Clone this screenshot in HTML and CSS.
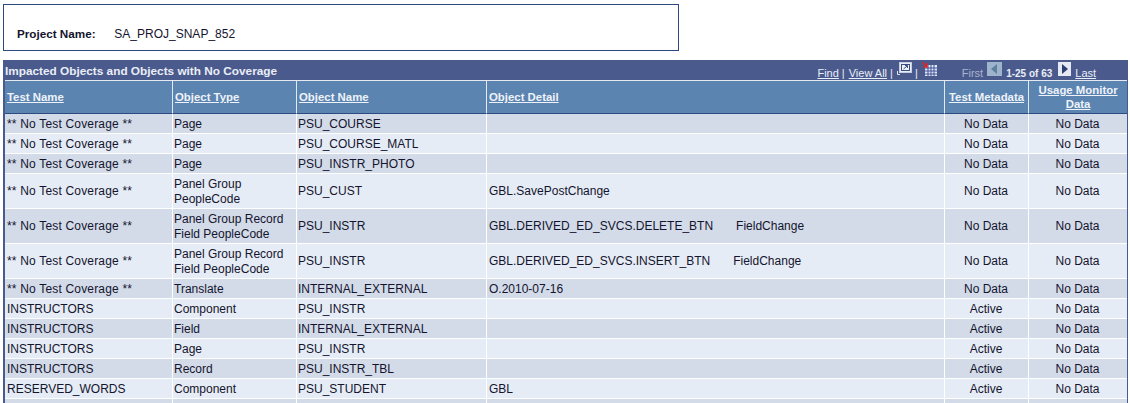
FILE: index.html
```html
<!DOCTYPE html>
<html lang="en">
  <head>
    <meta charset="UTF-8" />
    <title>Impacted Objects</title>
    <link rel="stylesheet" href="styles.css">
  </head>
  <body>
    <div class="project-box">
      <span class="project-label">Project Name:</span>
      <span class="project-value">SA_PROJ_SNAP_852</span>
    </div>

    <table class="grid">
      <colgroup>
        <col class="col-test" />
        <col class="col-type" />
        <col class="col-name" />
        <col class="col-detail" />
        <col class="col-meta" />
        <col class="col-usage" />
      </colgroup>
      <thead>
        <tr>
          <th colspan="6" class="title-cell">
            <div class="title-bar">
              <span class="title-text">Impacted Objects and Objects with No Coverage</span>
              <div class="nav">
                <a href="#">Find</a>
                <span class="sep">|</span>
                <a href="#">View All</a>
                <span class="sep">|</span>
                <svg class="icon" width="15" height="13" viewBox="0 0 15 13">
                  <path d="M0.5 9V12.5H3" stroke="#dfe6f2" fill="none" />
                  <rect x="2.5" y="0.5" width="12" height="10" fill="#e8edf6" stroke="#c6cfe0" />
                  <rect x="4.5" y="2.5" width="8" height="6" fill="#eef2f8" stroke="#39507f" />
                  <path d="M6.5 7L10 4M8 3.5H10.5V6" stroke="#39507f" fill="none" />
                </svg>
                <span class="sep">|</span>
                <svg class="icon grid-icon" width="15" height="14" viewBox="0 0 15 14">
                  <rect x="3" y="3" width="12" height="11" fill="#e4e9f4" />
                  <path d="M6 3V14M9 3V14M12 3V14M3 6H15M3 9H15M3 12H15" stroke="#3f4f9c" stroke-width="1" />
                  <path d="M0 0L5 5M5 1V5H1" stroke="#d8282c" stroke-width="1.5" fill="none" />
                </svg>
                <span class="first">First</span>
                <span class="page-btn off"><svg width="15" height="14" viewBox="0 0 15 14"><path d="M10 2V12L4 7Z" fill="#5f7f9f" /></svg></span>
                <b class="count">1-25 of 63</b>
                <span class="page-btn next"><svg width="13" height="14" viewBox="0 0 13 14"><path d="M4 2V12L10 7Z" fill="#2d3f70" /></svg></span>
                <a href="#">Last</a>
              </div>
            </div>
          </th>
        </tr>
        <tr class="head-row">
          <th><a href="#">Test Name</a></th>
          <th><a href="#">Object Type</a></th>
          <th><a href="#">Object Name</a></th>
          <th><a href="#">Object Detail</a></th>
          <th class="mid"><a href="#">Test Metadata</a></th>
          <th class="mid"><a href="#">Usage Monitor Data</a></th>
        </tr>
      </thead>
      <tbody>
        <tr class="dark"><td class="no-cov">** No Test Coverage **</td><td>Page</td><td>PSU_COURSE</td><td></td><td class="mid">No Data</td><td class="mid">No Data</td></tr>
        <tr><td class="no-cov">** No Test Coverage **</td><td>Page</td><td>PSU_COURSE_MATL</td><td></td><td class="mid">No Data</td><td class="mid">No Data</td></tr>
        <tr class="dark"><td class="no-cov">** No Test Coverage **</td><td>Page</td><td>PSU_INSTR_PHOTO</td><td></td><td class="mid">No Data</td><td class="mid">No Data</td></tr>
        <tr class="tall"><td class="no-cov">** No Test Coverage **</td><td class="two-line">Panel Group<br />PeopleCode</td><td>PSU_CUST</td><td>GBL.SavePostChange</td><td class="mid">No Data</td><td class="mid">No Data</td></tr>
        <tr class="dark tall"><td class="no-cov">** No Test Coverage **</td><td class="two-line">Panel Group Record<br />Field PeopleCode</td><td>PSU_INSTR</td><td><span class="detail">GBL.DERIVED_ED_SVCS.DELETE_BTN</span>FieldChange</td><td class="mid">No Data</td><td class="mid">No Data</td></tr>
        <tr class="tall"><td class="no-cov">** No Test Coverage **</td><td class="two-line">Panel Group Record<br />Field PeopleCode</td><td>PSU_INSTR</td><td><span class="detail">GBL.DERIVED_ED_SVCS.INSERT_BTN</span>FieldChange</td><td class="mid">No Data</td><td class="mid">No Data</td></tr>
        <tr class="dark"><td class="no-cov">** No Test Coverage **</td><td>Translate</td><td>INTERNAL_EXTERNAL</td><td>O.2010-07-16</td><td class="mid">No Data</td><td class="mid">No Data</td></tr>
        <tr><td>INSTRUCTORS</td><td>Component</td><td>PSU_INSTR</td><td></td><td class="mid">Active</td><td class="mid">No Data</td></tr>
        <tr class="dark"><td>INSTRUCTORS</td><td>Field</td><td>INTERNAL_EXTERNAL</td><td></td><td class="mid">Active</td><td class="mid">No Data</td></tr>
        <tr><td>INSTRUCTORS</td><td>Page</td><td>PSU_INSTR</td><td></td><td class="mid">Active</td><td class="mid">No Data</td></tr>
        <tr class="dark"><td>INSTRUCTORS</td><td>Record</td><td>PSU_INSTR_TBL</td><td></td><td class="mid">Active</td><td class="mid">No Data</td></tr>
        <tr><td>RESERVED_WORDS</td><td>Component</td><td>PSU_STUDENT</td><td>GBL</td><td class="mid">Active</td><td class="mid">No Data</td></tr>
        <tr class="dark"><td>&nbsp;</td><td>&nbsp;</td><td>&nbsp;</td><td></td><td class="mid">&nbsp;</td><td class="mid">&nbsp;</td></tr>
      </tbody>
    </table>
  </body>
</html>
```

FILE: styles.css
```css
html {
  overflow: hidden;
}
body {
  margin: 0;
  padding: 4px 2px 0 3px;
  background: #fff;
  font-family: "Liberation Sans", Arial, sans-serif;
  font-size: 12px;
  color: #14142e;
}
.project-box {
  box-sizing: border-box;
  width: 676px;
  height: 47px;
  margin-bottom: 9px;
  padding: 21px 0 0 13px;
  border: 1px solid #2c4a80;
  line-height: 15px;
}
.project-label {
  display: inline-block;
  width: 94px;
  font-size: 11.7px;
  font-weight: bold;
}
.grid {
  width: 1125px;
  table-layout: fixed;
  border-collapse: separate;
  border-spacing: 0;
  background: #4b5a8c;
  border-style: solid;
  border-color: #4b5a8c;
  border-width: 1px 1px 0 2px;
}
.col-test { width: 167px; }
.col-type { width: 124px; }
.col-name { width: 190px; }
.col-detail { width: 458px; }
.col-meta { width: 84px; }
.col-usage { width: 99px; }
.title-cell {
  padding: 0;
  height: 19px;
  border-bottom: 1px solid #e4e9f2;
  text-align: left;
}
.title-bar {
  display: flex;
  justify-content: space-between;
  align-items: center;
  height: 19px;
  padding: 0 31px 0 0;
}
.title-text {
  color: #e9eef8;
  font-weight: bold;
  font-size: 11.8px;
}
.nav {
  display: flex;
  align-items: flex-end;
  font-size: 11px;
  font-weight: normal;
  color: #e9eef8;
  height: 19px;
  line-height: 13px;
}
.nav a {
  color: #e9eef8;
}
.sep {
  margin: 0 4px 0 3px;
}
.icon {
  margin-bottom: 5px;
}
.grid-icon {
  margin-bottom: 4px;
}
.first {
  margin-left: 25px;
  color: #a9b4cc;
}
.page-btn {
  display: flex;
  margin: 0 4px 4px;
}
.page-btn.next {
  margin-left: 6px;
}
.page-btn svg {
  background: #e4e9f4;
}
.page-btn.off svg {
  background: #9db4cc;
}
.count {
  color: #e9eef8;
  font-size: 10px;
}
.head-row th {
  height: 32px;
  padding: 0 2px;
  background: #5b84b1;
  border-left: 1px solid #e4e9f2;
  border-bottom: 1px solid #2c4a80;
  text-align: left;
  vertical-align: middle;
  line-height: 14px;
  font-size: 11.4px;
  font-weight: bold;
}
.head-row th:first-child {
  border-left: 0;
}
.head-row th a {
  color: #eef2f9;
}
.head-row th.mid {
  padding: 0 1px;
  text-align: center;
}
td {
  height: 15px;
  padding: 3px 2px 1px 1px;
  border-bottom: 1px solid #fff;
  border-left: 1px solid #fff;
  background: #e6ecf5;
  line-height: 15px;
  vertical-align: middle;
}
td:first-child {
  border-left: 0;
  padding-left: 2px;
}
td:nth-child(4) {
  padding-left: 2px;
}
tr.tall td {
  padding-top: 2px;
  padding-bottom: 2px;
}
tr.tall td.two-line {
  padding-top: 3px;
  padding-bottom: 1px;
}
tr.dark td {
  background: #d3dbe8;
}
td.mid {
  text-align: center;
}
.no-cov {
  letter-spacing: 0.18px;
}
.detail {
  display: inline-block;
  margin-right: 23px;
}
```
